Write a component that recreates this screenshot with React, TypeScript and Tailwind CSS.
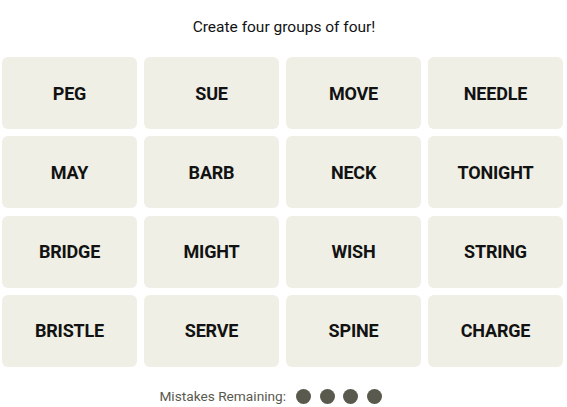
const words = [
  'PEG', 'SUE', 'MOVE', 'NEEDLE',
  'MAY', 'BARB', 'NECK', 'TONIGHT',
  'BRIDGE', 'MIGHT', 'WISH', 'STRING',
  'BRISTLE', 'SERVE', 'SPINE', 'CHARGE',
];

export default function App() {
  return (
    <div className="w-[567px] h-[407px] bg-white font-['Roboto',sans-serif] text-[#121212]">
      <p className="pt-[18px] h-[57px] text-center text-[15.5px] leading-[18px] pl-[1px]">
        Create four groups of four!
      </p>

      <div className="grid grid-cols-[repeat(4,135px)] auto-rows-[72px] gap-x-[7px] gap-y-[7.33px] pl-[2px]">
        {words.map((word) => (
          <button
            key={word}
            className="rounded-[6px] bg-[#efefe6] text-[18px] font-bold tracking-[-0.2px] text-[#121212] flex items-center justify-center"
          >
            {word}
          </button>
        ))}
      </div>

      {/* remaining mistakes */}
      <div className="flex items-center justify-center gap-[10px] mt-[19px] pr-[26px]">
        <span className="text-[13.7px] text-[#5a594e]">Mistakes Remaining:</span>
        <div className="flex gap-[8.5px]">
          {[0, 1, 2, 3].map((i) => (
            <span key={i} className="w-[15px] h-[15px] rounded-full bg-[#5a594e]" />
          ))}
        </div>
      </div>
    </div>
  );
}
